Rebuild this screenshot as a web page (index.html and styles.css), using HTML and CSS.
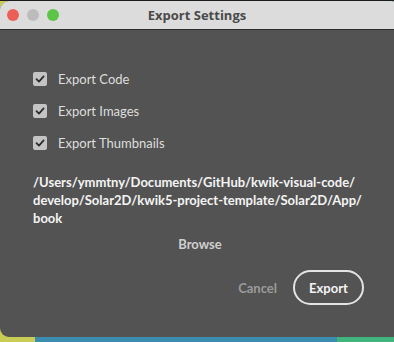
FILE: index.html
```html
<!DOCTYPE html>
<html lang="en">
<head>
    <meta charset="UTF-8">
    <meta name="viewport" content="width=device-width, initial-scale=1.0">
    <title>Export Settings</title>
    <link rel="stylesheet" href="styles.css">
</head>
<body>

    <div class="window">
        <div class="titlebar">
            <div class="lights">
                <span class="light red"></span>
                <span class="light gray"></span>
                <span class="light green"></span>
            </div>
            <div class="title">Export Settings</div>
        </div>

        <div class="content">
            <label class="check-row">
                <span class="box">
                    <svg width="10" height="10" viewBox="0 0 10 10"><path d="M1.5 5.2 L4 7.6 L8.6 2.4" fill="none" stroke="#2d2d2d" stroke-width="1.8" stroke-linecap="round" stroke-linejoin="round"/></svg>
                </span>
                Export Code
            </label>
            <label class="check-row">
                <span class="box">
                    <svg width="10" height="10" viewBox="0 0 10 10"><path d="M1.5 5.2 L4 7.6 L8.6 2.4" fill="none" stroke="#2d2d2d" stroke-width="1.8" stroke-linecap="round" stroke-linejoin="round"/></svg>
                </span>
                Export Images
            </label>
            <label class="check-row">
                <span class="box">
                    <svg width="10" height="10" viewBox="0 0 10 10"><path d="M1.5 5.2 L4 7.6 L8.6 2.4" fill="none" stroke="#2d2d2d" stroke-width="1.8" stroke-linecap="round" stroke-linejoin="round"/></svg>
                </span>
                Export Thumbnails
            </label>

            <div class="path">/Users/ymmtny/Documents/GitHub/kwik-visual-code/<br>develop/Solar2D/kwik5-project-template/Solar2D/App/<br>book</div>

            <div class="browse">Browse</div>

            <div class="actions">
                <button class="cancel">Cancel</button>
                <button class="export">Export</button>
            </div>
        </div>
    </div>

</body>
</html>
```

FILE: styles.css
```css
/* Desktop behind the dialog */
body {
    margin: 0;
    width: 394px;
    height: 342px;
    overflow: hidden;
    font-family: 'Lato', sans-serif;
    background: linear-gradient(to right, #c9cc55 0, #c9cc55 35px, #3b8db0 35px, #3b8db0 337px, #3fb47c 337px);
    border-top: 1px solid #1c1c1c;
    box-sizing: border-box;
}

.window {
    width: 400px;
    height: 336px;
    background-color: #535353;
    border-radius: 9px 9px 0 9px;
    overflow: hidden;
}

.titlebar {
    height: 28px;
    background-color: #dcdcdc;
    border-bottom: 1px solid #2e2e2e;
    display: flex;
    align-items: center;
    position: relative;
}

.lights {
    display: flex;
    gap: 8px;
    padding-left: 7px;
}

.light {
    width: 12px;
    height: 12px;
    border-radius: 50%;
}

.red { background-color: #ec5f57; }
.gray { background-color: #bcbcbc; }
.green { background-color: #5cc548; }

.title {
    position: absolute;
    left: 0;
    width: 394px;
    text-align: center;
    font-family: 'Open Sans', sans-serif;
    font-size: 13px;
    font-weight: 700;
    color: #4a4a4a;
}

.content {
    width: 394px;
    padding: 33px 30px 0 33px;
    box-sizing: border-box;
}

.check-row {
    display: flex;
    align-items: center;
    gap: 11px;
    height: 32px;
    font-size: 13px;
    color: #dedede;
}

.box {
    width: 14px;
    height: 14px;
    border-radius: 2px;
    background-color: #c4c4c4;
    display: flex;
    align-items: center;
    justify-content: center;
}

.path {
    margin-top: 14px;
    font-size: 13px;
    font-weight: 700;
    line-height: 18px;
    color: #f4f4f4;
    white-space: nowrap;
}

.browse {
    margin-top: 9px;
    text-align: center;
    font-size: 13px;
    font-weight: 700;
    color: #cfcfcf;
    margin-right: -3px;
}

.actions {
    margin-top: 18px;
    display: flex;
    justify-content: flex-end;
    align-items: center;
    gap: 16px;
}

.actions button {
    font-family: 'Lato', sans-serif;
    font-size: 13px;
    font-weight: 700;
    background: none;
    cursor: pointer;
}

.cancel {
    border: none;
    color: #9b9b9b;
    padding: 0;
}

.export {
    width: 71px;
    height: 35px;
    border: 2px solid #e4e4e4;
    border-radius: 18px;
    color: #f4f4f4;
}
```
